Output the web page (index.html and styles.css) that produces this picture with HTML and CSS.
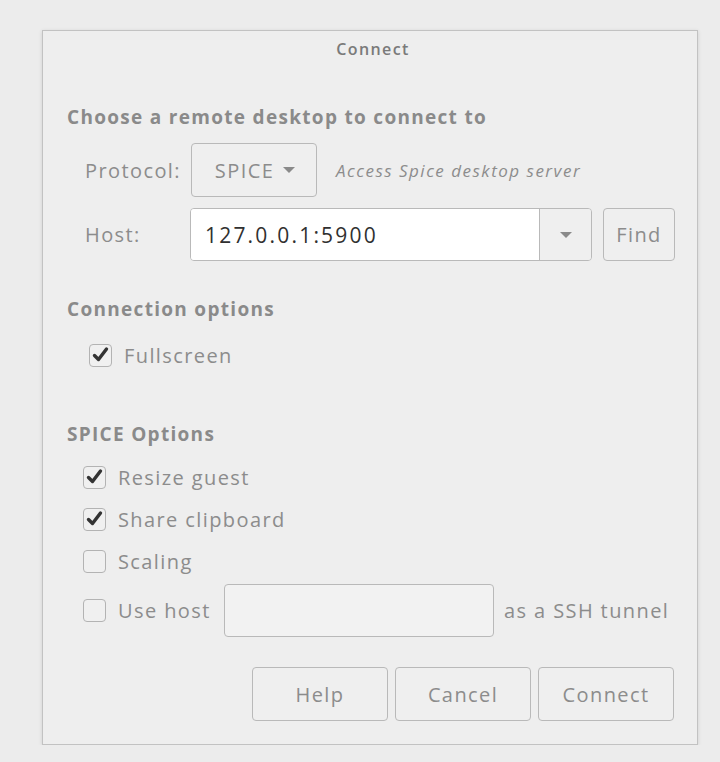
FILE: index.html
```html
<!DOCTYPE html>
<html>
<head>
<meta charset="utf-8">
<link rel="stylesheet" href="styles.css">
</head>
<body>
<div class="dialog">
  <div class="title">Connect</div>
  <div class="heading h1">Choose a remote desktop to connect to</div>
  <div class="grid">
    <div class="label">Protocol:</div>
    <div class="protorow">
      <div class="btn proto">SPICE <span class="arrow"></span></div>
      <div class="hint">Access Spice desktop server</div>
    </div>
    <div class="label">Host:</div>
    <div class="hostrow">
      <div class="combo">
        <div class="combo-text">127.0.0.1:5900</div>
        <div class="combo-btn"><span class="arrow"></span></div>
      </div>
      <div class="btn find">Find</div>
    </div>
  </div>
  <div class="heading h2">Connection options</div>
  <div class="check-row full">
    <span class="box checked"><svg viewBox="0 0 23 23" width="23" height="23"><path d="M5.5 11.5 L9.5 15.5 L17.5 5" fill="none" stroke="#333333" stroke-width="3.4" stroke-linecap="round" stroke-linejoin="round"/></svg></span>
    <span class="clabel">Fullscreen</span>
  </div>
  <div class="heading h3">SPICE Options</div>
  <div class="opts">
    <div class="check-row">
      <span class="box checked"><svg viewBox="0 0 23 23" width="23" height="23"><path d="M5.5 11.5 L9.5 15.5 L17.5 5" fill="none" stroke="#333333" stroke-width="3.4" stroke-linecap="round" stroke-linejoin="round"/></svg></span>
      <span class="clabel">Resize guest</span>
    </div>
    <div class="check-row">
      <span class="box checked"><svg viewBox="0 0 23 23" width="23" height="23"><path d="M5.5 11.5 L9.5 15.5 L17.5 5" fill="none" stroke="#333333" stroke-width="3.4" stroke-linecap="round" stroke-linejoin="round"/></svg></span>
      <span class="clabel">Share clipboard</span>
    </div>
    <div class="check-row">
      <span class="box"></span>
      <span class="clabel">Scaling</span>
    </div>
    <div class="check-row tunnel">
      <span class="box"></span>
      <span class="clabel host">Use host</span>
      <div class="entry"></div>
      <span class="clabel after">as a SSH tunnel</span>
    </div>
  </div>
  <div class="buttons">
    <div class="btn act">Help</div>
    <div class="btn act">Cancel</div>
    <div class="btn act">Connect</div>
  </div>
</div>
</body>
</html>
```

FILE: styles.css
```css
html, body {
  margin: 0;
  padding: 0;
  background: #ececec;
}
body {
  font-family: "Open Sans", "DejaVu Sans", sans-serif;
  color: #8c8c8c;
  padding: 30px 0 0 42px;
}
.dialog {
  width: 630px;
  height: 713px;
  border: 1px solid #c2c2c2;
  background: #eeeeee;
  box-shadow: 0 1px 4px rgba(0,0,0,0.12);
  padding: 0 0 0 24px;
  box-sizing: content-box;
}
.title {
  height: 36px;
  line-height: 36px;
  text-align: center;
  font-size: 16px;
  font-weight: 600;
  letter-spacing: 1.4px;
  color: #7a7a7a;
  margin-left: -24px;
  padding-left: 6px;
}
.heading {
  font-size: 19px;
  font-weight: 700;
  letter-spacing: 1.3px;
  line-height: 24px;
  color: #8a8a8a;
}
.h1 { margin-top: 38px; }
.grid {
  margin-top: 14px;
  display: grid;
  grid-template-columns: 105px auto;
  grid-template-rows: 54px 53px;
  row-gap: 11px;
  margin-left: 18px;
}
.label {
  font-size: 20px;
  letter-spacing: 1.4px;
  display: flex;
  align-items: center;
  color: #8c8c8c;
}
.protorow, .hostrow {
  display: flex;
  align-items: stretch;
}
.btn {
  border: 1px solid #b9b9b9;
  border-radius: 4px;
  background: #efefef;
  display: flex;
  align-items: center;
  justify-content: center;
  font-size: 20px;
  letter-spacing: 1.4px;
  color: #8c8c8c;
  box-sizing: border-box;
}
.proto {
  width: 126px;
  margin-left: 1px;
  gap: 9px;
  padding-left: 2px;
}
.arrow {
  display: inline-block;
  width: 0;
  height: 0;
  border-left: 6px solid transparent;
  border-right: 6px solid transparent;
  border-top: 6px solid #8a8a8a;
}
.hint {
  font-style: italic;
  font-size: 17px;
  letter-spacing: 1.5px;
  color: #8c8c8c;
  display: flex;
  align-items: center;
  margin-left: 19px;
}
.combo {
  width: 402px;
  display: flex;
  border: 1px solid #b9b9b9;
  border-radius: 4px;
  box-sizing: border-box;
  overflow: hidden;
}
.combo-text {
  flex: 1;
  background: #ffffff;
  color: #303030;
  font-size: 21px;
  letter-spacing: 2.2px;
  display: flex;
  align-items: center;
  padding-left: 14px;
}
.combo-btn {
  width: 51px;
  border-left: 1px solid #b9b9b9;
  background: #efefef;
  display: flex;
  align-items: center;
  justify-content: center;
}
.find {
  width: 72px;
  margin-left: 11px;
}
.h2 { margin-top: 36px; }
.check-row {
  display: flex;
  align-items: center;
  height: 24px;
}
.full { margin-top: 22px; margin-left: 22px; }
.box {
  width: 23px;
  height: 23px;
  border: 1px solid #b3b3b3;
  border-radius: 4px;
  background: #f0f0f0;
  box-sizing: border-box;
  position: relative;
  flex: none;
}
.box svg {
  position: absolute;
  left: -1px;
  top: -1px;
}
.clabel {
  font-size: 20px;
  letter-spacing: 1.4px;
  margin-left: 12px;
  color: #8c8c8c;
  white-space: nowrap;
}
.clabel.host { width: 93px; flex: none; }
.h3 { margin-top: 55px; }
.opts {
  margin-top: 19px;
  margin-left: 16px;
  display: flex;
  flex-direction: column;
  gap: 18px;
}
.check-row.tunnel {
  height: 53px;
  margin-top: -7px;
}
.entry {
  width: 270px;
  height: 53px;
  border: 1px solid #b9b9b9;
  border-radius: 4px;
  background: #f2f2f2;
  box-sizing: border-box;
  margin-left: 13px;
  flex: none;
}
.clabel.after { margin-left: 10px; }
.buttons {
  margin-top: 30px;
  display: flex;
  justify-content: flex-end;
  gap: 7px;
  padding-right: 23px;
}
.act {
  width: 136px;
  height: 54px;
}
```
